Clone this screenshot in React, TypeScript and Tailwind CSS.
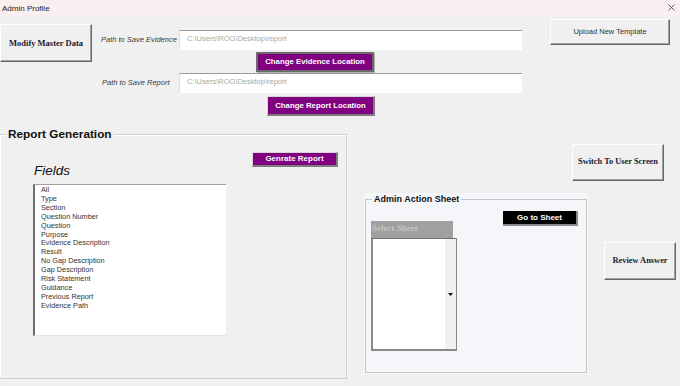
import React from "react";

const raised =
  "bg-[#f0f0f0] border-t border-l border-t-[#ffffff] border-l-[#ffffff] border-r border-b border-r-[#696969] border-b-[#696969] shadow-[inset_-1px_-1px_0_#a0a0a0] flex items-center justify-center";

const purpleRaised =
  "bg-[#800080] text-white font-bold border-t border-l border-t-[#d8d8d8] border-l-[#d8d8d8] border-r-2 border-b-2 border-r-[#7d7d7d] border-b-[#7d7d7d] flex items-center justify-center";

const fields = [
  "All",
  "Type",
  "Section",
  "Question Number",
  "Question",
  "Purpose",
  "Evidence Description",
  "Result",
  "No Gap Description",
  "Gap Description",
  "Risk Statement",
  "Guidance",
  "Previous Report",
  "Evidence Path",
];

export default function App() {
  return (
    <div className="w-[680px] h-[386px] bg-[#f0f0f0] overflow-hidden flex flex-col font-['Liberation_Sans',Arial,sans-serif] text-[#222]">
      {/* Title bar */}
      <div className="h-[17px] shrink-0 bg-[#f9eff1] flex items-center justify-between pl-[2px] pr-[5px]">
        <span className="text-[8px] leading-none text-[#1a1a1a]">Admin Profile</span>
        <svg width="7" height="7" viewBox="0 0 7 7" className="mb-[2px]">
          <path d="M0.5 0.5 L6.5 6.5 M6.5 0.5 L0.5 6.5" stroke="#333" strokeWidth="0.8" fill="none" />
        </svg>
      </div>

      {/* Upper section */}
      <div className="h-[110px] shrink-0 flex items-start">
        <button
          className={`${raised} mt-[7px] w-[92px] h-[38px] font-['Liberation_Serif',serif] font-bold text-[8.5px] text-[#1a1a2a]`}
        >
          Modify Master Data
        </button>

        <div className="ml-[9px] w-[421px] flex flex-col">
          <div className="mt-[13px] flex items-center h-[20px]">
            <span className="w-[78px] italic text-[7.5px] text-[#3a3a3a] whitespace-nowrap">
              Path to Save Evidence
            </span>
            <div className="w-[343px] h-[20px] bg-white border-t border-l border-t-[#9a9a9a] border-l-[#e0e0e0] flex items-center pl-[7px] pb-[3px] text-[7.5px] text-[#a8a8a8]">
              {"C:\\Users\\ROG\\Desktop\\report"}
            </div>
          </div>
          <button className="ml-[155px] mt-[2px] w-[118px] h-[20px] bg-[#800080] text-white font-bold text-[7.8px] border-2 border-[#6b6b6b] shadow-[1px_1px_0_#b0b0b0] flex items-center justify-center">
            Change Evidence Location
          </button>
          <div className="mt-[1px] flex items-center h-[20px]">
            <span className="w-[78px] italic text-[7.5px] text-[#3a3a3a] whitespace-nowrap pl-[1px]">
              Path to Save Report
            </span>
            <div className="w-[343px] h-[20px] bg-white border-t border-l border-t-[#9a9a9a] border-l-[#e0e0e0] flex items-center pl-[7px] pb-[3px] text-[7.5px] text-[#a8a8a8]">
              {"C:\\Users\\ROG\\Desktop\\report"}
            </div>
          </div>
          <button className={`${purpleRaised} ml-[166px] mt-[3px] w-[108px] h-[20px] text-[7.8px]`}>
            Change Report Location
          </button>
        </div>

        <button className={`${raised} ml-[28px] mt-[2px] w-[120px] h-[26px] text-[7.5px] text-[#333]`}>
          Upload New Template
        </button>
      </div>

      {/* Lower section */}
      <div className="flex items-start">
        {/* Report Generation group */}
        <div className="relative ml-[-1px] mt-[7px] w-[348px] h-[245px] border border-[#cfcfcf] shadow-[inset_1px_1px_0_#ffffff]">
          <span className="absolute left-[6px] top-[-8px] px-[2px] bg-[#f0f0f0] text-[11.8px] font-bold leading-[14px] text-[#111]">
            Report Generation
          </span>
          <div className="flex items-start">
            <div className="ml-[33px] w-[193px] flex flex-col">
              <span className="mt-[28px] ml-[1px] italic text-[13.5px] leading-[16px] text-[#111]">Fields</span>
              <div className="mt-[5px] h-[152px] bg-white border-l-2 border-t border-l-[#6e6e6e] border-t-[#a0a0a0] border-b border-b-[#e4e4e4] pl-[6px] pt-[1px]">
                {fields.map((f) => (
                  <div key={f} className="text-[7.3px] leading-[8.9px] text-[#333] whitespace-nowrap">
                    {f}
                  </div>
                ))}
              </div>
            </div>
            <button className={`${purpleRaised} ml-[26px] mt-[17px] w-[86px] h-[15px] text-[8px]`}>
              Genrate Report
            </button>
          </div>
        </div>

        {/* Right area */}
        <div className="flex flex-col">
          <button
            className={`${raised} ml-[225px] mt-[17px] w-[92px] h-[37px] font-['Liberation_Serif',serif] font-bold text-[8.4px] text-[#1a1a2a]`}
          >
            Switch To User Screen
          </button>
          <div className="flex items-start mt-[12px]">
            <div className="ml-[17px] w-[224px] h-[181px] bg-[#f4f6fa] p-[1px] pt-[6px]">
              <div className="relative h-full border border-[#c4c4c4]">
                <span className="absolute left-[6px] top-[-7px] px-[2px] bg-[#f4f6fa] text-[9px] font-bold leading-[12px] text-[#111]">
                  Admin Action Sheet
                </span>
                <div className="flex items-start">
                  <div className="ml-[5px] mt-[21px] w-[86px] flex flex-col">
                    <div className="w-[82px] h-[17px] bg-[#a0a0a0] pl-[1px] pt-[2px] font-['Liberation_Serif',serif] font-bold text-[9px] leading-[11px] text-[#c4c4c4]">
                      Select Sheet
                    </div>
                    <div className="h-[113px] bg-white border-l-2 border-l-[#8a8a8a] border-t border-t-[#707070] border-r border-r-[#8a8a8a] border-b-2 border-b-[#8a8a8a] flex">
                      <div className="flex-1" />
                      <div className="w-[11px] bg-[#f0f0f0] flex items-center justify-center">
                        <svg width="5" height="3" viewBox="0 0 5 3">
                          <path d="M0 0 L5 0 L2.5 3 Z" fill="#111" />
                        </svg>
                      </div>
                    </div>
                  </div>
                  <button className="ml-[46px] mt-[11px] w-[75px] h-[15px] bg-black text-white font-bold text-[8px] border-r-2 border-b-2 border-r-[#8a8a8a] border-b-[#8a8a8a] flex items-center justify-center">
                    Go to Sheet
                  </button>
                </div>
              </div>
            </div>
            <button
              className={`${raised} ml-[16px] mt-[49px] w-[72px] h-[38px] font-['Liberation_Serif',serif] font-bold text-[8.4px] text-[#1a1a2a]`}
            >
              Review Answer
            </button>
          </div>
        </div>
      </div>
    </div>
  );
}
